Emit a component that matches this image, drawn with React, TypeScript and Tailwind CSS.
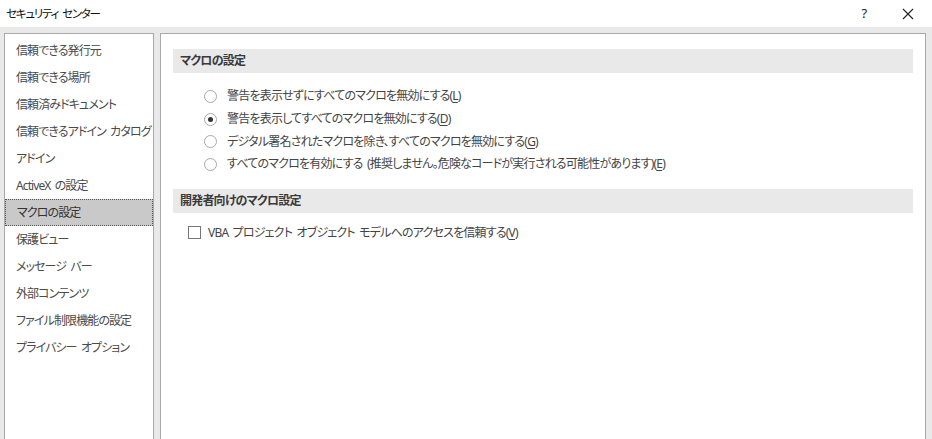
import React from 'react'

const jp = "[font-family:'Noto_Sans','Noto_Sans_CJK_JP',sans-serif] [font-feature-settings:'palt']"

const navItems = [
  '信頼できる発行元',
  '信頼できる場所',
  '信頼済みドキュメント',
  '信頼できるアドイン カタログ',
  'アドイン',
  'ActiveX の設定',
  'マクロの設定',
  '保護ビュー',
  'メッセージ バー',
  '外部コンテンツ',
  'ファイル制限機能の設定',
  'プライバシー オプション',
]

const radios: [string, string, string][] = [
  ['警告を表示せずにすべてのマクロを無効にする(', 'L', ')'],
  ['警告を表示してすべてのマクロを無効にする(', 'D', ')'],
  ['デジタル署名されたマクロを除き、すべてのマクロを無効にする(', 'G', ')'],
  ['すべてのマクロを有効にする (推奨しません。危険なコードが実行される可能性があります)(', 'E', ')'],
]

function Radio({ checked }: { checked?: boolean }) {
  return (
    <span className="w-[13px] h-[13px] rounded-full border border-[#a8a8a8] bg-white flex items-center justify-center shrink-0">
      {checked && <span className="w-[5px] h-[5px] rounded-full bg-[#333]" />}
    </span>
  )
}

export default function App() {
  const selected = 'マクロの設定'
  return (
    <div className={`w-[932px] h-[439px] overflow-hidden bg-[#e9e9e9] flex flex-col text-[12px] tracking-[-0.8px] [word-spacing:2px] ${jp}`}>
      {/* title bar */}
      <div className="h-[27px] bg-white flex items-center shrink-0">
        <span className="pl-[6px] text-[11.5px] tracking-[-1.2px] text-[#111]">セキュリティ センター</span>
        <div className="ml-auto flex items-center">
          <span className="w-[20px] text-center text-[13px] text-[#222] mr-[28px]">?</span>
          <svg width="12" height="12" viewBox="0 0 12 12" className="mr-[18px]">
            <path d="M1 1L11 11M11 1L1 11" stroke="#222" strokeWidth="1.1" />
          </svg>
        </div>
      </div>

      <div className="flex-1 flex pt-[6px] pl-[4px] pr-[6px] gap-[6px] min-h-0">
        {/* left nav */}
        <div className="w-[150px] bg-white border border-[#a9a9a9] border-b-0 pt-[3px] overflow-hidden tracking-[-0.9px]">
          {navItems.map(item => (
            <div key={item}
              className={`h-[27px] flex items-center pl-[11px] whitespace-nowrap ${item === selected ? 'bg-[#c9c9c9] border border-dotted border-[#555] text-[#333] pl-[10px]' : 'text-[#4a4a4a]'}`}>
              {item}
            </div>
          ))}
        </div>

        {/* content */}
        <div className="flex-1 bg-white border border-[#a9a9a9] border-b-0 px-[12px] pt-[15px]">
          <div className="h-[24px] bg-[#e9e9e9] flex items-center pl-[7px] text-[#3a3a3a] font-semibold">マクロの設定</div>
          <div className="pl-[31px] pt-[12px] flex flex-col">
            {radios.map(([a, k, b], i) => (
              <div key={k} className="h-[22.7px] flex items-center gap-[10px] text-[#444] whitespace-nowrap">
                <Radio checked={i === 1} />
                <span>{a}<span className="underline underline-offset-2">{k}</span>{b}</span>
              </div>
            ))}
          </div>
          <div className="mt-[13px] h-[24px] bg-[#e9e9e9] flex items-center pl-[7px] text-[#3a3a3a] font-semibold">開発者向けのマクロ設定</div>
          <div className="pl-[15px] pt-[8px] flex items-center gap-[7px] h-[32px] text-[#444] whitespace-nowrap">
            <span className="w-[13px] h-[13px] border border-[#777] bg-white shrink-0" />
            <span>VBA プロジェクト オブジェクト モデルへのアクセスを信頼する(<span className="underline underline-offset-2">V</span>)</span>
          </div>
        </div>
      </div>
    </div>
  )
}
